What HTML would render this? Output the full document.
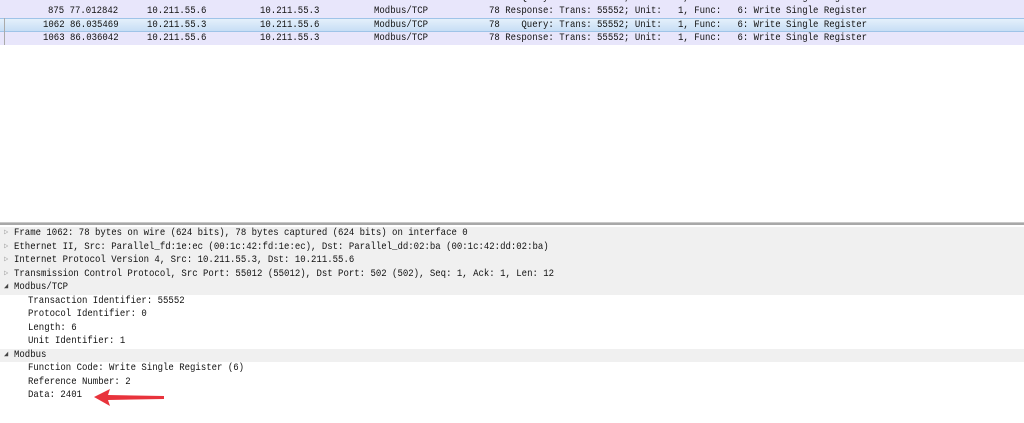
<!DOCTYPE html>
<html><head><meta charset="utf-8"><style>
body{margin:0;width:1024px;height:423px;background:#fff;position:relative;overflow:hidden;font-family:"Liberation Mono","DejaVu Sans Mono",monospace;font-size:9px;color:#111}
.r{position:absolute;left:0;width:1024px;height:13.5px;line-height:13.5px;white-space:pre}
.r span{position:absolute;top:0;transform:scaleY(1.12)}
.d span{transform:scaleY(1.12);transform-origin:left center}
.lav{background:#e8e6fb}
.sel{background:linear-gradient(#e4f0fb,#c7def5);border-top:1px solid #9fc4e8;border-bottom:1px solid #9fc4e8;box-sizing:border-box;line-height:12px}
.d{position:absolute;left:0;width:1024px;height:13.5px;line-height:13.5px;white-space:pre}
.g{background:#f0f0f0}
.t{position:absolute;font-size:7px;color:#999;left:4px}
</style></head><body>
<div class="r lav" style="top:-8.5px"><span style="left:48px">874 77.012481</span><span style="left:147px">10.211.55.3</span><span style="left:260px">10.211.55.6</span><span style="left:374px">Modbus/TCP</span><span style="left:489px">78    Query: Trans: 55552; Unit:   1, Func:   6: Write Single Register</span></div>
<div class="r lav" style="top:5px"><span style="left:48px">875 77.012842</span><span style="left:147px">10.211.55.6</span><span style="left:260px">10.211.55.3</span><span style="left:374px">Modbus/TCP</span><span style="left:489px">78 Response: Trans: 55552; Unit:   1, Func:   6: Write Single Register</span></div>
<div class="r sel" style="top:18px"><span style="left:43px">1062 86.035469</span><span style="left:147px">10.211.55.3</span><span style="left:260px">10.211.55.6</span><span style="left:374px">Modbus/TCP</span><span style="left:489px">78    Query: Trans: 55552; Unit:   1, Func:   6: Write Single Register</span></div>
<div class="r lav" style="top:31.5px"><span style="left:43px">1063 86.036042</span><span style="left:147px">10.211.55.6</span><span style="left:260px">10.211.55.3</span><span style="left:374px">Modbus/TCP</span><span style="left:489px">78 Response: Trans: 55552; Unit:   1, Func:   6: Write Single Register</span></div>
<div style="position:absolute;left:4px;top:18px;width:1px;height:27px;background:#aaa"></div>
<div style="position:absolute;left:0;top:222px;width:1024px;height:1px;background:#c8c8c8"></div>
<div style="position:absolute;left:0;top:223px;width:1024px;height:2px;background:#a8a8a8"></div>

<div class="d g" style="top:227px"><span class="t">▷</span><span style="position:absolute;left:14px">Frame 1062: 78 bytes on wire (624 bits), 78 bytes captured (624 bits) on interface 0</span></div>
<div class="d g" style="top:240.5px"><span class="t">▷</span><span style="position:absolute;left:14px">Ethernet II, Src: Parallel_fd:1e:ec (00:1c:42:fd:1e:ec), Dst: Parallel_dd:02:ba (00:1c:42:dd:02:ba)</span></div>
<div class="d g" style="top:254px"><span class="t">▷</span><span style="position:absolute;left:14px">Internet Protocol Version 4, Src: 10.211.55.3, Dst: 10.211.55.6</span></div>
<div class="d g" style="top:267.5px"><span class="t">▷</span><span style="position:absolute;left:14px">Transmission Control Protocol, Src Port: 55012 (55012), Dst Port: 502 (502), Seq: 1, Ack: 1, Len: 12</span></div>
<div class="d g" style="top:281px"><span class="t" style="color:#444">◢</span><span style="position:absolute;left:14px">Modbus/TCP</span></div>
<div class="d" style="top:294.5px"><span style="position:absolute;left:28px">Transaction Identifier: 55552</span></div>
<div class="d" style="top:308px"><span style="position:absolute;left:28px">Protocol Identifier: 0</span></div>
<div class="d" style="top:321.5px"><span style="position:absolute;left:28px">Length: 6</span></div>
<div class="d" style="top:335px"><span style="position:absolute;left:28px">Unit Identifier: 1</span></div>
<div class="d g" style="top:348.5px"><span class="t" style="color:#444">◢</span><span style="position:absolute;left:14px">Modbus</span></div>
<div class="d" style="top:362px"><span style="position:absolute;left:28px">Function Code: Write Single Register (6)</span></div>
<div class="d" style="top:375.5px"><span style="position:absolute;left:28px">Reference Number: 2</span></div>
<div class="d" style="top:389px"><span style="position:absolute;left:28px">Data: 2401</span></div>
<svg style="position:absolute;left:0;top:0" width="1024" height="423"><path d="M94 397 L110 389 L108 395 L164 396 L164 399 L108 400 L110 406 Z" fill="#e8333c"/></svg>
</body></html>
